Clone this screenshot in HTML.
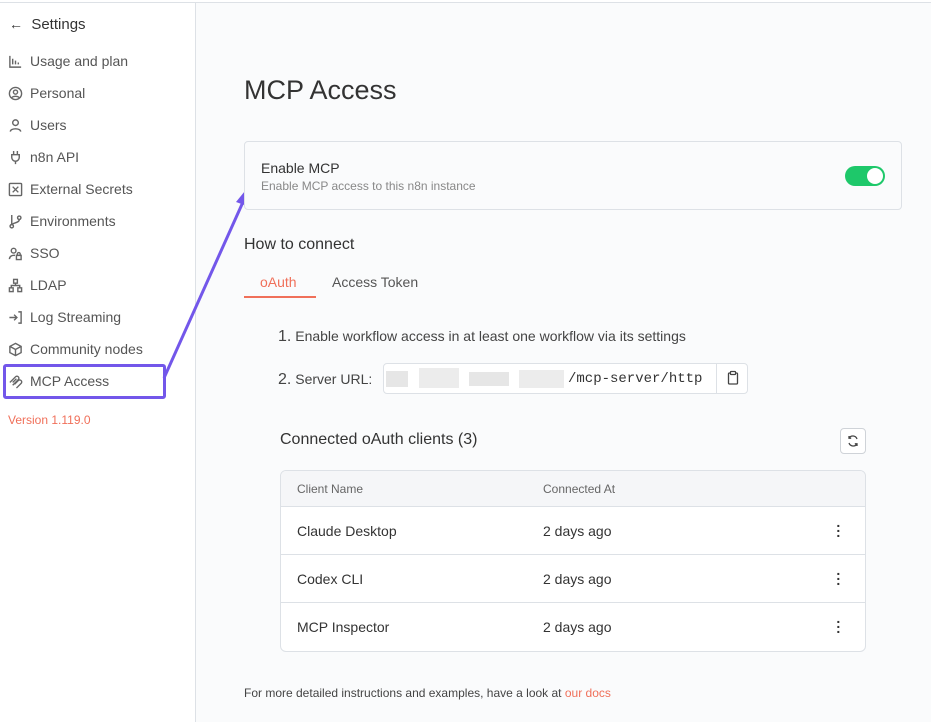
<!DOCTYPE html>
<html><head><style>
*{box-sizing:border-box;margin:0;padding:0}
body{width:931px;height:722px;overflow:hidden;font-family:"Liberation Sans",sans-serif;background:#fafbfc;color:#333;position:relative}
.top{position:absolute;left:0;top:0;width:931px;height:3px;border-bottom:1px solid #dde1e6;background:#fff}
.side{position:absolute;left:0;top:3px;width:196px;height:719px;background:#fff;border-right:1px solid #dde1e6}
.hd{position:absolute;left:9px;top:13px;font-size:15px;color:#333}
.it{position:absolute;left:8px;font-size:14px;color:#555;display:flex;align-items:center}
.it svg{width:15px;height:15px;margin-right:7px;stroke:#666;fill:none;stroke-width:1.5}
.ver{position:absolute;left:8px;top:410px;font-size:12px;color:#f0705a}
.main{position:absolute;left:196px;top:3px;right:0;bottom:0}
h1{position:absolute;left:48px;top:72px;font-size:27px;font-weight:normal;color:#333}
.card{position:absolute;left:48px;top:138px;width:658px;height:69px;border:1px solid #dde1e6;border-radius:4px;background:#fafbfc}
.card .t{position:absolute;left:16px;top:18px;font-size:14px;color:#333}
.card .s{position:absolute;left:16px;top:37px;font-size:12px;color:#888}
.tg{position:absolute;right:16px;top:24px;width:40px;height:20px;border-radius:10px;background:#1ec86a}
.tg:after{content:"";position:absolute;right:2px;top:2px;width:16px;height:16px;border-radius:50%;background:#fff}
.h2{position:absolute;left:48px;top:233px;font-size:16px;color:#333}
.tab{position:absolute;top:271px;font-size:14px}
.ul{position:absolute;left:48px;top:293px;width:72px;height:2px;background:#f0705a}
.st{position:absolute;left:82px;font-size:14px;color:#444}
.st b{font-weight:normal;font-size:16px}
.url{position:absolute;left:187px;top:360px;width:365px;height:31px;border:1px solid #dde1e6;border-radius:4px;background:#fff}
.url .m{position:absolute;left:184px;top:7px;font-family:"Liberation Mono",monospace;font-size:14px;color:#333}
.url .c{position:absolute;left:332px;top:0;width:32px;height:29px;border-left:1px solid #dde1e6}
.bl{position:absolute;background:#e6e6e6}
.h3{position:absolute;left:84px;top:428px;font-size:16px;color:#333}
.rf{position:absolute;left:644px;top:425px;width:26px;height:26px;border:1px solid #cfd3d8;border-radius:4px;background:#fff}
.tbl{position:absolute;left:84px;top:467px;width:586px;height:182px;border:1px solid #dde1e6;border-radius:6px;background:#fff;overflow:hidden}
.th{height:36px;background:#f5f6f8;border-bottom:1px solid #dde1e6;font-size:12px;color:#666;position:relative}
.row{height:48px;border-bottom:1px solid #dde1e6;position:relative;font-size:14px;color:#333}
.row:last-child{border-bottom:none}
.c1{position:absolute;left:16px;top:50%;transform:translateY(-50%)}
.c2{position:absolute;left:262px;top:50%;transform:translateY(-50%)}
.dot{position:absolute;right:24px;top:50%;transform:translateY(-50%);font-weight:bold;font-size:14px;line-height:5px;letter-spacing:0}
.ft{position:absolute;left:48px;top:683px;font-size:12px;color:#444}
.ft span{color:#f0705a}
</style></head><body>
<div class="top"></div>
<div class="side">
<div class="hd"><span style="font-size:14px">←</span>&nbsp;&nbsp;Settings</div>
<div class="it" style="top:50px"><svg viewBox="0 0 16 16"><path d="M2 2v12h12M5 11V5M8 11V7M11 11V9"/></svg>Usage and plan</div>
<div class="it" style="top:82px"><svg viewBox="0 0 16 16"><circle cx="8" cy="8" r="6.5"/><circle cx="8" cy="6.5" r="2.2"/><path d="M4 12.5c1.5-2 6.5-2 8 0"/></svg>Personal</div>
<div class="it" style="top:114px"><svg viewBox="0 0 16 16"><circle cx="8" cy="5" r="3"/><path d="M2.5 14.5c0-4 11-4 11 0"/></svg>Users</div>
<div class="it" style="top:146px"><svg viewBox="0 0 16 16"><path d="M6 1v4M10 1v4M4 5h8v3a4 4 0 0 1-8 0zM8 12v3"/></svg>n8n API</div>
<div class="it" style="top:178px"><svg viewBox="0 0 16 16"><rect x="1.5" y="1.5" width="13" height="13" rx="1"/><path d="M5 5l6 6M11 5l-6 6"/></svg>External Secrets</div>
<div class="it" style="top:210px"><svg viewBox="0 0 16 16"><circle cx="4" cy="13" r="1.8"/><circle cx="12" cy="4" r="1.8"/><path d="M4 1v10M12 6c0 4-8 3-8 6"/></svg>Environments</div>
<div class="it" style="top:242px"><svg viewBox="0 0 16 16"><circle cx="6" cy="5" r="2.5"/><path d="M1.5 14c0-3 3-4.5 6-4M9 10h5v4.5H9zM10 10V8.5a1.5 1.5 0 0 1 3 0V10"/></svg>SSO</div>
<div class="it" style="top:274px"><svg viewBox="0 0 16 16"><rect x="6" y="1.5" width="4" height="4"/><rect x="1.5" y="10.5" width="4" height="4"/><rect x="10.5" y="10.5" width="4" height="4"/><path d="M8 5.5v2.5M3.5 10.5V8h9v2.5"/></svg>LDAP</div>
<div class="it" style="top:306px"><svg viewBox="0 0 16 16"><path d="M1.5 8h8M6.5 5l3 3-3 3M11 2h3v12h-3"/></svg>Log Streaming</div>
<div class="it" style="top:338px"><svg viewBox="0 0 16 16"><path d="M8 1.5l6 3.2v6.6L8 14.5l-6-3.2V4.7zM2 4.7l6 3.3 6-3.3M8 8v6.5"/></svg>Community nodes</div>
<div class="it" style="top:370px"><svg viewBox="0 0 16 16"><path d="M2 9l6-6a2 2 0 0 1 3 3L5 12M5 9l4-4M7 11l4-4a2 2 0 0 1 3 3l-5 5"/></svg>MCP Access</div>
<div class="ver">Version 1.119.0</div>
</div>
<div style="position:absolute;left:3px;top:364px;width:163px;height:35px;border:3px solid #7357ea;border-radius:3px"></div>
<svg style="position:absolute;left:0;top:0" width="931" height="722"><line x1="164" y1="378" x2="243" y2="202" stroke="#7357ea" stroke-width="3"/><polygon points="249,186 236,202 250,207" fill="#7357ea"/></svg>
<div class="main">
<h1>MCP Access</h1>
<div class="card"><div class="t">Enable MCP</div><div class="s">Enable MCP access to this n8n instance</div><div class="tg"></div></div>
<div class="h2">How to connect</div>
<div class="tab" style="left:64px;color:#f0705a">oAuth</div>
<div class="tab" style="left:136px;color:#555">Access Token</div>
<div class="ul"></div>
<div class="st" style="top:325px"><b>1.</b> Enable workflow access in at least one workflow via its settings</div>
<div class="st" style="top:368px"><b>2.</b> Server URL:</div>
<div class="url">
<div class="bl" style="left:2px;top:7px;width:22px;height:16px"></div>
<div class="bl" style="left:35px;top:4px;width:40px;height:20px;background:#ececec"></div>
<div class="bl" style="left:85px;top:8px;width:40px;height:14px"></div>
<div class="bl" style="left:135px;top:6px;width:45px;height:18px;background:#ececec"></div>
<div class="m">/mcp-server/http</div>
<div class="c"><svg width="32" height="29" viewBox="0 0 32 29"><rect x="11.5" y="9" width="9" height="11" rx="1" fill="none" stroke="#444" stroke-width="1.3"/><rect x="13.5" y="7.5" width="5" height="3" rx=".5" fill="#fff" stroke="#444" stroke-width="1.2"/></svg></div>
</div>
<div class="h3">Connected oAuth clients (3)</div>
<div class="rf"><svg width="24" height="24" viewBox="0 0 24 24" fill="none" stroke="#444" stroke-width="1.3"><path d="M16 10a4.5 4.5 0 0 0-8-1M8 14a4.5 4.5 0 0 0 8 1M8 7v2.2h2.2M16 17v-2.2h-2.2"/></svg></div>
<div class="tbl">
<div class="th"><span class="c1">Client Name</span><span class="c2">Connected At</span></div>
<div class="row"><span class="c1">Claude Desktop</span><span class="c2">2 days ago</span><span class="dot">·<br>·<br>·</span></div>
<div class="row"><span class="c1">Codex CLI</span><span class="c2">2 days ago</span><span class="dot">·<br>·<br>·</span></div>
<div class="row"><span class="c1">MCP Inspector</span><span class="c2">2 days ago</span><span class="dot">·<br>·<br>·</span></div>
</div>
<div class="ft">For more detailed instructions and examples, have a look at <span>our docs</span></div>
</div>
</body></html>
